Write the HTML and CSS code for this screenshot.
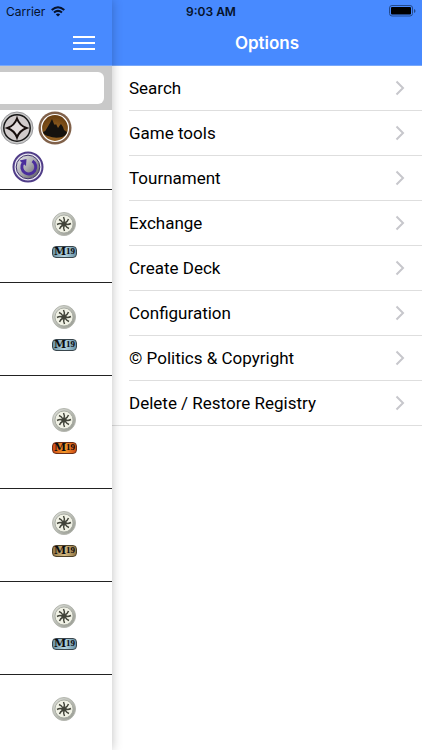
FILE: index.html
```html
<!DOCTYPE html>
<html lang="en">
<head>
  <meta charset="UTF-8" />
  <meta name="viewport" content="width=device-width, initial-scale=1.0"/>
  <title>Options</title>
  <link rel="stylesheet" href="styles.css">
</head>
<body>
  <!-- shared symbols -->
  <svg class="defs" width="0" height="0" aria-hidden="true">
    <defs>
      <linearGradient id="silver" x1="0" y1="0" x2="1" y2="1">
        <stop offset="0" stop-color="#e2e4de"/>
        <stop offset="1" stop-color="#92958c"/>
      </linearGradient>
      <radialGradient id="bronze" cx="0.5" cy="0.7" r="0.6">
        <stop offset="0" stop-color="#a8702a"/>
        <stop offset="1" stop-color="#6b4112"/>
      </radialGradient>
      <linearGradient id="violet" x1="0" y1="0" x2="1" y2="1">
        <stop offset="0" stop-color="#f0f0f4"/>
        <stop offset="0.5" stop-color="#a9a9ae"/>
        <stop offset="1" stop-color="#4e4e55"/>
      </linearGradient>
      <symbol id="sun" viewBox="0 0 24 24">
        <circle cx="12" cy="12" r="11.5" fill="url(#silver)" stroke="#b4b7af"/>
        <circle cx="12" cy="12" r="9" fill="#f1f2e6" stroke="#a0a39a" stroke-width="0.800"/>
        <g fill="none" stroke="#42443a" stroke-width="1.500">
          <path d="M12 10Q13 8 11.500 5M12 14Q11 16 12.500 19M10 12Q8 11 5 12.500M14 12Q16 13 19 11.500"/>
          <path d="M10.500 10.500Q9.500 8.500 7 7.500M13.500 13.500Q14.500 15.500 17 16.500M13.500 10.500Q15.500 9.500 16.500 7M10.500 13.500Q8.500 14.500 7.500 17"/>
        </g>
        <circle cx="12" cy="12" r="2.600" fill="#42443a"/>
      </symbol>
      <symbol id="chevron" viewBox="0 0 10 16">
        <path d="M1.500 1.500L8 8l-6.500 6.500" fill="none" stroke="#c7c7cc" stroke-width="2"/>
      </symbol>
    </defs>
  </svg>

  <div class="status">
    <div class="carrier">
      <span>Carrier</span>
      <svg width="14" height="11" viewBox="0 0 14 11" fill="none" stroke="#06122b" stroke-width="2">
        <path d="M0.700 4Q7-1.600 13.300 4M3 6.600Q7 3.200 11 6.600"/>
        <path d="M7 10.500L4.800 8.400Q7 6.700 9.200 8.400z" fill="#06122b" stroke="none"/>
      </svg>
    </div>
    <span class="time">9:03 AM</span>
    <svg class="battery" width="27" height="12" viewBox="0 0 27 12">
      <rect x="0.500" y="0.500" width="23" height="10.500" rx="2.500" fill="none" stroke="#244a8c"/>
      <rect x="2" y="2" width="20" height="7.500" rx="1" fill="#000"/>
      <path d="M25 4v4q1.500-.5 1.500-2T25 4" fill="#244a8c"/>
    </svg>
  </div>

  <div class="app">
    <main class="content">
      <header class="bar">
        <button class="menu-toggle" aria-label="Menu">
          <svg width="22" height="14" viewBox="0 0 22 14" stroke="#fff" stroke-width="2">
            <path d="M0 1h22M0 7h22M0 13h22"/>
          </svg>
        </button>
      </header>
      <div class="search">
        <input type="text" aria-label="Search cards">
      </div>
      <div class="filters">
        <div class="filter-line">
          <button class="coin" aria-label="Colorless">
            <svg width="34" height="34" viewBox="0 0 34 34">
              <circle cx="17" cy="17" r="16" fill="#c9c9c9" stroke="#98989b"/>
              <circle cx="17" cy="17" r="13.200" fill="#d0caca" stroke="#161616" stroke-width="1.500"/>
              <path d="M17 7.500Q19.500 14.500 26.500 17Q19.500 19.500 17 26.500Q14.500 19.500 7.500 17Q14.500 14.500 17 7.500z" fill="#e3dcdc" stroke="#160d0b" stroke-width="2"/>
            </svg>
          </button>
          <button class="coin" aria-label="Land">
            <svg width="34" height="34" viewBox="0 0 34 34">
              <circle cx="17" cy="17" r="16.500" fill="#80614a"/>
              <circle cx="17" cy="17" r="13.500" fill="url(#bronze)" stroke="#fff" stroke-width="1.200"/>
              <path d="M5 21q3-1 4-4l3-5 2-4 2 5 1 1 1-1 2 4 2-3 1-1 2 3 1 3 3 2q-1 4-5 5-7 2-14-1-4-1-5-4" fill="#15120f"/>
            </svg>
          </button>
        </div>
        <div class="filter-line">
          <button class="coin reset" aria-label="Reset">
            <svg width="32" height="32" viewBox="0 0 32 32">
              <circle cx="16" cy="16" r="14.500" fill="#e8e6f2" stroke="#503d88" stroke-width="2"/>
              <circle cx="16" cy="16" r="11.800" fill="url(#violet)" stroke="#42366e"/>
              <path d="M20.500 10A7 7 0 1 1 11 12" fill="none" stroke="#4a2e9c" stroke-width="3"/>
              <path d="M7.500 9.500l7-1.500-.5 7z" fill="#4a2e9c"/>
            </svg>
          </button>
        </div>
      </div>
      <ul class="cards">
        <li class="card">
          <svg class="mana" width="24" height="24"><use href="#sun"/></svg>
          <span class="set">M<sup>19</sup></span>
        </li>
        <li class="card">
          <svg class="mana" width="24" height="24"><use href="#sun"/></svg>
          <span class="set">M<sup>19</sup></span>
        </li>
        <li class="card tall">
          <svg class="mana" width="24" height="24"><use href="#sun"/></svg>
          <span class="set mythic">M<sup>19</sup></span>
        </li>
        <li class="card">
          <svg class="mana" width="24" height="24"><use href="#sun"/></svg>
          <span class="set rare">M<sup>19</sup></span>
        </li>
        <li class="card">
          <svg class="mana" width="24" height="24"><use href="#sun"/></svg>
          <span class="set">M<sup>19</sup></span>
        </li>
        <li class="card">
          <svg class="mana" width="24" height="24"><use href="#sun"/></svg>
        </li>
      </ul>
    </main>

    <aside class="menu">
      <header class="bar">
        <h1>Options</h1>
      </header>
      <nav class="options">
        <a href="#search"><span>Search</span><svg width="10" height="16"><use href="#chevron"/></svg></a>
        <a href="#tools"><span>Game tools</span><svg width="10" height="16"><use href="#chevron"/></svg></a>
        <a href="#tournament"><span>Tournament</span><svg width="10" height="16"><use href="#chevron"/></svg></a>
        <a href="#exchange"><span>Exchange</span><svg width="10" height="16"><use href="#chevron"/></svg></a>
        <a href="#deck"><span>Create Deck</span><svg width="10" height="16"><use href="#chevron"/></svg></a>
        <a href="#configuration"><span>Configuration</span><svg width="10" height="16"><use href="#chevron"/></svg></a>
        <a href="#politics"><span>© Politics &amp; Copyright</span><svg width="10" height="16"><use href="#chevron"/></svg></a>
        <a href="#registry"><span>Delete / Restore Registry</span><svg width="10" height="16"><use href="#chevron"/></svg></a>
      </nav>
    </aside>
  </div>
</body>
</html>
```
FILE: styles.css
```css
* {
  box-sizing: border-box;
}
body {
  margin: 0;
  font-family: Inter, "Liberation Sans", sans-serif;
  background: #fff;
  color: #000;
}
button {
  padding: 0;
  border: none;
  background: none;
  cursor: pointer;
}
svg {
  display: block;
  flex: none;
}
.defs {
  position: absolute;
}

/* status bar lies over both headers */
.status {
  position: absolute;
  top: 0;
  left: 0;
  right: 0;
  z-index: 2;
  height: 22px;
  padding: 0 6px;
  display: grid;
  grid-template-columns: 1fr auto 1fr;
  align-items: center;
  font-size: 12px;
  color: #06122b;
}
.carrier {
  display: flex;
  align-items: center;
  gap: 6px;
}
.time {
  font-weight: 600;
}
.battery {
  justify-self: end;
}

.app {
  display: flex;
  min-height: 100vh;
}
.content {
  flex: 1;
  min-width: 0;
  position: relative;
  z-index: 1;
  background: #fff;
  box-shadow: 0 0 10px rgba(0,0,0,0.25);
}
.menu {
  width: 310px;
  background: #fff;
}
.bar {
  height: 66px;
  padding-top: 20px;
  display: flex;
  align-items: center;
  justify-content: center;
  background: #488aff;
  border-bottom: 1px solid #78a8fa;
}
.bar h1 {
  margin: 0;
  font-size: 17px;
  font-weight: 600;
  color: #fff;
}
.content .bar {
  justify-content: flex-end;
  padding-right: 17px;
}

.search {
  height: 44px;
  padding: 6px 8px 6px 0;
  display: flex;
  background: #c9c9c9;
}
.search input {
  width: 100%;
  border: none;
  border-radius: 0 6px 6px 0;
  background: #fff;
}
.filters {
  height: 79px;
  padding-top: 1px;
}
.filter-line {
  height: 40px;
  display: flex;
  align-items: flex-start;
  gap: 4px;
}
.reset {
  margin-left: 12px;
}

.cards {
  list-style: none;
  margin: 0;
  padding: 0;
}
.card {
  min-height: 93px;
  padding: 22px 35px 0 0;
  display: flex;
  flex-direction: column;
  align-items: flex-end;
  gap: 10px;
  border-top: 1px solid #222;
}
.card:last-child {
  min-height: 76px;
}
.card.tall {
  min-height: 113px;
  padding-top: 32px;
}
.mana {
  margin-right: 1px;
}
.set {
  width: 25px;
  height: 12px;
  display: flex;
  justify-content: center;
  border: 1px solid #39464d;
  border-radius: 4px;
  background: linear-gradient(90deg, #6a93a6, #b4d3df 50%, #6a93a6);
  color: #0b0b0f;
  font: bold 11px/10px "DejaVu Serif", serif;
}
.set sup {
  font-family: "Liberation Serif", serif;
  font-size: 9px;
  line-height: 8px;
}
.set.mythic {
  border-color: #6b3018;
  background: linear-gradient(90deg, #d04a14, #f39a2a 50%, #d04a14);
}
.set.rare {
  border-color: #4d4128;
  background: linear-gradient(90deg, #947745, #d3b980 50%, #947745);
}

.options a {
  height: 45px;
  margin-left: 17px;
  padding-right: 17px;
  display: flex;
  align-items: center;
  justify-content: space-between;
  border-bottom: 1px solid #dedede;
  font-family: Roboto, "Liberation Sans", sans-serif;
  font-size: 17px;
  color: #000;
  text-decoration: none;
}
.options a:last-child {
  margin-left: 0;
  padding-left: 17px;
}
```
